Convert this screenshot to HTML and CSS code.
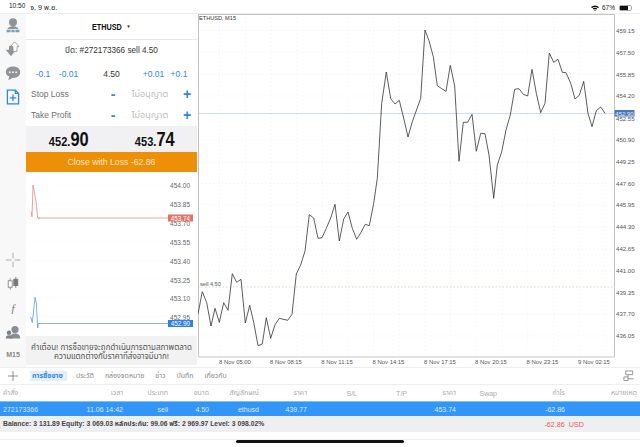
FILE: index.html
```html
<!DOCTYPE html>
<html lang="th">
<head>
<meta charset="utf-8">
<title>ETHUSD</title>
<link rel="stylesheet" href="styles.css">
</head>
<body>
<div class="app">
  <header class="status">
    <div class="status-left"><span>10:50</span><span class="status-date">จ. 9 พ.ย.</span></div>
    <div class="status-right">
      <svg class="wifi" viewBox="0 0 8 6"><path d="M0 2Q4-1.2 8 2L7 3Q4 .8 1 3ZM1.7 3.6Q4 1.8 6.3 3.6L5.4 4.4Q4 3.4 2.6 4.4ZM3.1 5Q4 4.4 4.9 5L4 6Z"/></svg>
      <span>67%</span>
      <span class="battery"><span class="battery-fill"></span></span>
    </div>
  </header>
  <main class="main">
    <nav class="rail">
      <div class="rail-group">
        <svg class="rail-icon" viewBox="0 0 20 20"><circle cx="10" cy="6.500" r="5" fill="#8f9499"/><path d="M4 13.500Q10 9 16 13.500L17 15H3Z" fill="#8f9499"/><path d="M2 16h5v3H2zM8 16h4v3H8zM13 16h5v3h-5z" fill="#7f9cb0"/></svg>
        <svg class="rail-icon" viewBox="0 0 20 20"><path d="M1 11h4V6h5v5h4l-6.500 8Z" fill="#8f9499"/><path d="M12 1l5.500 6H15v6h-5V7H7Z" fill="#fff" stroke="#8f9499"/></svg>
        <svg class="rail-icon" viewBox="0 0 20 20"><path d="M10 2c5.500 0 9 3 9 7s-3.500 7-9 7l-6 3 1.500-4.500C2.500 13 1 11.500 1 9c0-4 3.500-7 9-7Z" fill="#8f9499"/><circle cx="6" cy="9" r="1.300" fill="#eee"/><circle cx="10" cy="9" r="1.300" fill="#eee"/><circle cx="14" cy="9" r="1.300" fill="#eee"/></svg>
        <svg class="rail-icon" viewBox="0 0 20 20"><path d="M3 1.500h10l4 4v13H3Z" fill="none" stroke="#2f86e8" stroke-width="1.600"/><path d="M13 1.500v4h4M10 7v8M6 11h8" fill="none" stroke="#2f86e8" stroke-width="1.600"/></svg>
      </div>
      <div class="rail-group">
        <svg class="rail-icon" viewBox="0 0 20 20"><path d="M10 1v7M10 12v7M1 10h7M12 10h7" stroke="#a5a8ab" stroke-width="1.200" fill="none"/></svg>
        <svg class="rail-icon" viewBox="0 0 20 20"><path d="M6.500 3v14M13.500 1v14" stroke="#777" fill="none"/><rect x="4" y="6" width="5" height="8" fill="#fff" stroke="#777"/><rect x="11" y="4" width="5" height="8" fill="#777" stroke="#777"/></svg>
        <span class="rail-f">f</span>
        <svg class="rail-icon" viewBox="0 0 20 20"><circle cx="12.500" cy="7" r="4.500" fill="#8a8e92"/><path d="M6 18q0-6 6.500-6T19 18Z" fill="#8a8e92"/><circle cx="5" cy="11" r="2.800" fill="#7c8186"/><path d="M1 18q0-4 4-4t4 4Z" fill="#7c8186"/></svg>
        <span class="rail-label">M15</span>
      </div>
    </nav>
    <section class="panel">
      <div class="panel-title"><span class="symbol">ETHUSD</span><span class="caret">▼</span></div>
      <div class="close-label">ปิด: #272173366 sell 4.50</div>
      <div class="steppers">
        <span class="step">-0.1</span><span class="step">-0.01</span><span class="volume">4.50</span><span class="step">+0.01</span><span class="step">+0.1</span>
      </div>
      <div class="level"><span class="level-name">Stop Loss</span><span class="sign">-</span><span class="level-value">ไม่อนุญาต</span><span class="sign">+</span></div>
      <div class="level"><span class="level-name">Take Profit</span><span class="sign">-</span><span class="level-value">ไม่อนุญาต</span><span class="sign">+</span></div>
      <div class="prices">
        <div class="price"><span class="price-small">452.</span><span class="price-big">90</span></div>
        <div class="price"><span class="price-small">453.</span><span class="price-big">74</span></div>
      </div>
      <button class="close-btn">Close with Loss -62.86</button>
      <svg class="tick-chart" viewBox="26 172 171 162">
        <path class="tick-grid" d="M30 185.500H168M30 204H168M30 223H168M30 242H168M30 261H168M30 280H168M30 298H168M30 317H168"/>
        <path class="tick-red-line" d="M38 218H168"/>
        <path class="tick-blue-line" d="M38 323.500H168"/>
        <polyline class="tick-red" points="31,211.700 32,216.700 33,185 36,201.700 37.700,218 40,218"/>
        <polyline class="tick-blue" points="30.700,317 32.300,322.700 35,297.300 36.300,303 37.700,328 38.300,323.500"/>
        <g class="tick-labels">
          <text x="190" y="188">454.00</text>
          <text x="190" y="206.500">453.85</text>
          <text x="190" y="225.500">453.70</text>
          <text x="190" y="244.500">453.55</text>
          <text x="190" y="263.500">453.40</text>
          <text x="190" y="282.500">453.25</text>
          <text x="190" y="300.500">453.10</text>
          <text x="190" y="319.500">452.95</text>
        </g>
        <rect class="tag-red" x="168" y="214.500" width="25" height="7"/>
        <text class="tag-text" x="180.500" y="220.500">453.74</text>
        <rect class="tag-blue" x="168" y="320" width="25" height="7"/>
        <text class="tag-text" x="180.500" y="326">452.90</text>
      </svg>
      <div class="warning">คำเตือน! การซื้อขายจะถูกดำเนินการตามสภาพตลาด<br>ความแตกต่างกับราคาที่ส่งอาจมีมาก!</div>
    </section>
    <section class="chart">
      <svg class="chart-svg" viewBox="198 14 442 353">
        <path class="grid" d="M219.500 14V357M245.200 14V357M270.900 14V357M296.600 14V357M322.300 14V357M348 14V357M373.700 14V357M399.400 14V357M425.100 14V357M450.800 14V357M476.500 14V357M502.200 14V357M527.900 14V357M553.600 14V357M579.300 14V357M605 14V357"/>
        <path class="grid" d="M198 30.500H614M198 52.500H614M198 74.500H614M198 96H614M198 140H614M198 162H614M198 183.500H614M198 205H614M198 227H614M198 249H614M198 271H614M198 314H614M198 336H614"/>
        <path class="sell-line" d="M198 287H614"/>
        <path class="bid-line" d="M198 113.500H614"/>
        <path class="frame" d="M198.500 357V14.500H614.500V357H198.500"/>
        <polyline class="price-line" points="198,314 202.300,291.700 206.700,302.700 211,326 215,308.300 219.300,322.300 223.700,302.700 228,310.300 232.300,273.700 236.700,282.300 241,279.300 245.300,323 249.700,305.300 253.700,322.300 258,345.700 262.300,344 266.300,317.700 270.700,338.300 275,324.700 279.300,318.300 287.700,320.300 292,314.300 296.300,274 300.700,265 305,251 309.300,214.700 313.700,218 318,238.300 322,237.700 326.300,228.300 330.700,218 335,204.300 339.300,241 343.700,219 348,212 352.300,228.300 356.700,239.300 361,232.300 365.300,224.300 369.300,225.700 373.700,203.300 377.300,178.300 381.700,103.300 386.300,72 390.700,98.700 395,104 399.300,100.300 403.700,118.300 408,137 412.300,121.700 420.700,98.300 425,30 429,40.700 433.300,56.700 437.300,85.700 441.700,88.700 446,91.300 450.300,65.300 454.700,86 459,161.300 463.300,122.300 467.700,122.300 472,114.300 476.300,151.300 480.700,133.300 485,133.700 489,155 493.700,198.300 497.300,165 501.700,151.700 506,130 510.300,115 514.700,89.300 519,88.700 523.300,94.300 527.700,96 532,69.300 536.300,93.300 540.700,112.700 545,103.300 549.300,53 553.700,62.300 558,59.300 562.300,72.300 566,72.700 570.700,83.300 575,99 579.300,95.300 583.700,81.300 588,113.300 592,126.700 596.300,110.700 600.700,107 605,113.300"/>
        <text class="chart-title" x="199" y="20">ETHUSD, M15</text>
        <text class="chart-note" x="200" y="286">sell 4.50</text>
        <g class="y-axis">
          <text x="616" y="32.700">459.15</text><text x="616" y="54.700">457.50</text><text x="616" y="76.700">455.85</text><text x="616" y="98.200">454.20</text><text x="616" y="120.800">452.55</text><text x="616" y="142.200">450.90</text><text x="616" y="164.200">449.25</text><text x="616" y="185.700">447.60</text><text x="616" y="207.200">445.95</text><text x="616" y="229.200">444.30</text><text x="616" y="251.200">442.65</text><text x="616" y="273.200">441.00</text><text x="616" y="294.700">439.35</text><text x="616" y="316.200">437.70</text><text x="616" y="338.200">436.05</text>
        </g>
        <rect class="bid-tag" x="614.500" y="110" width="20" height="6.500"/>
        <text class="bid-text" x="624.500" y="115.600">452.90</text>
        <g class="x-axis">
          <text x="235" y="363.500">8 Nov 05:00</text><text x="286" y="363.500">8 Nov 08:15</text><text x="337" y="363.500">8 Nov 11:15</text><text x="388.500" y="363.500">8 Nov 14:15</text><text x="440" y="363.500">8 Nov 17:15</text><text x="491" y="363.500">8 Nov 20:15</text><text x="542.500" y="363.500">8 Nov 23:15</text><text x="594" y="363.500">9 Nov 02:15</text>
        </g>
      </svg>
    </section>
  </main>
  <div class="tabs">
    <svg class="plus" viewBox="0 0 12 12"><path d="M6 1v10M1 6h10" fill="none" stroke="#8c8f92"/></svg>
    <span class="tab active">การซื้อขาย</span>
    <span class="tab">ประวัติ</span>
    <span class="tab">กล่องจดหมาย</span>
    <span class="tab">ข่าว</span>
    <span class="tab">บันทึก</span>
    <span class="tab">เกี่ยวกับ</span>
    <svg class="layout-icon" viewBox="0 0 12 12"><path d="M3 .500h7.500v4H3ZM1 7h4.500v4H1ZM5.500 5v2M5.500 9h6" fill="none" stroke="#8c8f92"/></svg>
  </div>
  <div class="row row-head">
    <span class="first">คำสั่ง</span><span>เวลา</span><span>ประเภท</span><span>ขนาด</span><span>สัญลักษณ์</span><span>ราคา</span><span>S/L</span><span>T/P</span><span>ราคา</span><span>Swap</span><span>กำไร</span><span>หมายเหตุ</span>
  </div>
  <div class="row row-trade">
    <span class="first">272173366</span><span>11.06 14:42</span><span>sell</span><span>4.50</span><span>ethusd</span><span>439.77</span><span></span><span></span><span>453.74</span><span></span><span>-62.86</span><span></span>
  </div>
  <div class="balance">
    <span class="balance-text">Balance: 3 131.89 Equity: 3 069.03 หลักประกัน: 99.06 ฟรี: 2 969.97 Level: 3 098.02%</span>
    <span class="balance-loss">-62.86&nbsp; USD</span>
  </div>
  <footer class="home"><span class="home-bar"></span></footer>
</div>
</body>
</html>
```
FILE: styles.css
```css
* { box-sizing: border-box; }
html, body { margin: 0; padding: 0; background: #fff; }
body { font-family: "Liberation Sans", "Noto Sans Thai", "Noto Sans", sans-serif; color: #333; overflow: hidden; }
.app { width: 640px; height: 447px; display: flex; flex-direction: column; }

.status { height: 13px; padding: 2px 8px 0 9px; display: flex; justify-content: space-between; align-items: center; font-size: 6.500px; color: #222; }
.status-left { display: flex; gap: 5px; }
.status-date { font-size: 7.200px; }
.status-right { display: flex; align-items: center; gap: 2px; }
.wifi { width: 8px; height: 6px; margin-right: 1px; }
.battery { width: 13px; height: 6px; border: 1px solid #aaa; border-radius: 2px; display: block; padding: 0; margin-left: 2px; }
.battery-fill { display: block; width: 8px; height: 4px; background: #111; }

.main { height: 354px; display: flex; border-top: 1px solid #eee; }
.rail { width: 26px; padding: 3px 0 6px; display: flex; flex-direction: column; justify-content: space-between; align-items: center; background: #f8f8f8; }
.rail-group { display: flex; flex-direction: column; align-items: center; gap: 8px; }
.rail-icon { width: 16px; height: 16px; display: block; }
.rail-f { height: 16px; font: italic 11px/16px "Liberation Serif", serif; color: #777; }
.rail-label { font-size: 7px; font-weight: 700; color: #888; line-height: 13px; }

.panel { width: 171px; display: flex; flex-direction: column; background: #fff; }
.panel-title { height: 26px; display: flex; justify-content: center; align-items: center; gap: 4px; border-bottom: 1px solid #e8e8e8; }
.symbol { font-size: 9.700px; font-weight: 700; color: #111; margin: 0 -5px; transform: scaleX(.75); }
.caret { font-size: 4.500px; color: #222; }
.close-label { height: 21px; padding-top: 5px; text-align: center; font-size: 8.200px; line-height: 12px; color: #333; }
.steppers { height: 22px; padding: 3px 0 0 5px; display: grid; grid-template-columns: 24px 27px 59px 25px 26px; align-items: center; justify-items: center; font-size: 8.500px; }
.step { color: #2f86e8; }
.volume { color: #333; }
.level { height: 21px; padding-left: 5px; display: grid; grid-template-columns: 75px 14px 60px 14px; align-items: center; font-size: 8.500px; }
.level-name { color: #6f6f6f; }
.level-value { text-align: center; color: #bdbdbd; font-size: 9px; }
.sign { text-align: center; color: #2f86e8; font-size: 14px; font-weight: 700; line-height: 12px; }
.prices { height: 26px; margin-top: 1px; display: flex; background: #f1f1f3; color: #111; }
.price { flex: 1; display: flex; justify-content: center; align-items: baseline; padding-top: 2px; font-weight: 700; transform: scaleX(.82); }
.price-small { font-size: 13.500px; }
.price-big { font-size: 20px; line-height: 22px; }
.close-btn { height: 20px; border: 0; padding: 0; background: #ee9007; color: #fbe5c4; font: 8.700px "Liberation Sans", sans-serif; }
.tick-chart { width: 171px; height: 162px; display: block; }
.tick-grid { stroke: #ececec; stroke-width: .600; stroke-dasharray: 1 3; fill: none; }
.tick-red-line { stroke: #e6a9a4; fill: none; }
.tick-blue-line { stroke: #8fb2d8; fill: none; }
.tick-red { fill: none; stroke: #e08c85; stroke-width: .800; }
.tick-blue { fill: none; stroke: #5f9ada; stroke-width: .800; }
.tick-labels text { font-size: 6.500px; fill: #666; text-anchor: end; }
.tag-red { fill: #e2716a; }
.tag-blue { fill: #2f80e8; }
.tag-text { font-size: 6.300px; fill: #fff; text-anchor: middle; }
.warning { flex: 1; margin: 2px 0; background: #f2f2f2; text-align: center; font-size: 8px; line-height: 9px; padding-top: 7px; color: #555; white-space: nowrap; }

.chart { flex: 1; margin-left: 1px; min-width: 0; }
.chart-svg { width: 442px; height: 353px; display: block; }
.grid { stroke: #e8e8e8; stroke-width: .600; stroke-dasharray: 1 3; fill: none; }
.sell-line { stroke: #b6d3a8; stroke-width: .700; stroke-dasharray: 1.500 2; fill: none; }
.bid-line { stroke: #c5d3e3; stroke-width: .800; fill: none; }
.frame { stroke: #c4c4c4; fill: none; }
.price-line { fill: none; stroke: #333; stroke-width: .800; }
.chart-title { font-size: 5.600px; fill: #333; }
.chart-note { font-size: 5.600px; fill: #555; }
.y-axis text { font-size: 6.100px; fill: #555; }
.x-axis text { font-size: 5.900px; fill: #555; text-anchor: middle; }
.bid-tag { fill: #4a79b8; }
.bid-text { font-size: 6px; fill: #e4ecf6; text-anchor: middle; }

.tabs { height: 18px; border-top: 1px solid #efefef; border-bottom: 1px solid #efefef; display: flex; align-items: center; padding-left: 7px; font-size: 7px; color: #888; }
.plus { width: 12px; height: 12px; margin-right: 11px; }
.tab { margin-right: 7px; line-height: 10px; padding: 0 2px; }
.tab.active { background: #e4effb; color: #2f86e8; font-weight: 700; padding: 0 4px 0 2px; }
.layout-icon { width: 11px; height: 12px; margin-left: auto; margin-right: 6px; }

.row { display: grid; grid-template-columns: 60px 60px 45px 41px 50px 48px 50px 50px 49px 41px 68px 72px; padding: 0 3px; align-items: center; text-align: right; font-size: 7px; }
.row .first { text-align: left; }
.row-head { height: 16px; color: #aaa; background: #fff; }
.row-trade { height: 15px; background: #3395f7; color: #d9ecfd; border-top: 1px solid #7cc3f5; }
.balance { height: 16px; background: #eeeff1; display: flex; align-items: center; padding-left: 3px; font-size: 6.800px; }
.balance-text { font-weight: 700; color: #444; }
.balance-loss { margin-left: auto; margin-right: 56px; color: #e2605a; font-size: 7.200px; }
.home { flex: 1; display: flex; justify-content: center; padding-top: 8px; border-top: 0; position: relative; }
.home::before { content: ""; position: absolute; left: 0; right: 0; top: 7px; height: 1px; background: #f0f0f0; }
.home-bar { width: 168px; height: 2.500px; border-radius: 2px; background: #111; position: relative; }
```
